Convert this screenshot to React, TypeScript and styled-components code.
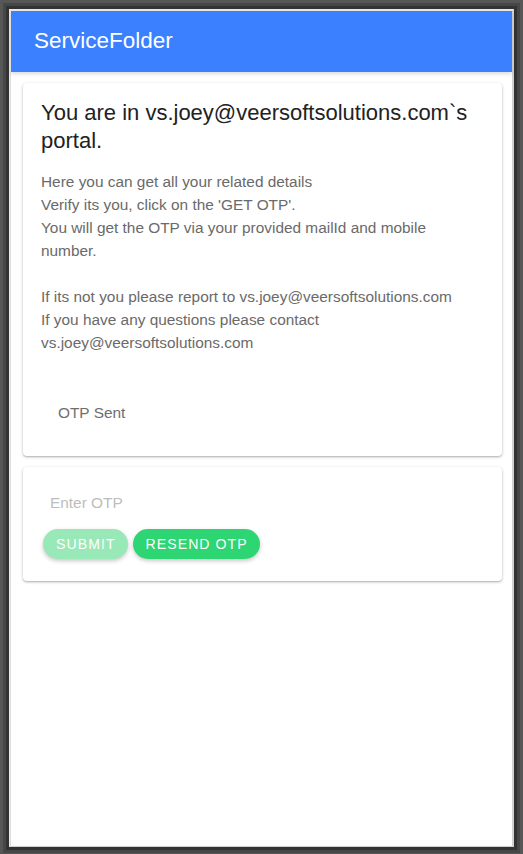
import React from "react";
import styled, { createGlobalStyle } from "styled-components";

const GlobalStyle = createGlobalStyle`
  html, body {
    margin: 0;
    height: 854px;
  }
  body {
    background: #575757;
    padding: 9px 9px 7px 9px;
    box-sizing: border-box;
    font-family: "Liberation Sans", Arial, sans-serif;
    overflow: hidden;
  }
  #root {
    height: 100%;
  }
`;

const App = () => {
  return (
    <>
      <GlobalStyle />
      <Window>
        <AppBar>
          <Brand>ServiceFolder</Brand>
        </AppBar>
        <Content>
          <Card>
            <Title>You are in vs.joey@veersoftsolutions.com`s portal.</Title>
            <Body>
              Here you can get all your related details
              <br />
              Verify its you, click on the 'GET OTP'.
              <br />
              You will get the OTP via your provided mailId and mobile number.
              <br />
              <br />
              If its not you please report to vs.joey@veersoftsolutions.com
              <br />
              If you have any questions please contact vs.joey@veersoftsolutions.com
            </Body>
            <StatusButton disabled>OTP Sent</StatusButton>
          </Card>
          <Card $compact>
            <OtpInput placeholder="Enter OTP" />
            <Actions>
              <PillButton $muted>Submit</PillButton>
              <PillButton>Resend OTP</PillButton>
            </Actions>
          </Card>
        </Content>
      </Window>
    </>
  );
};

export default App;

const Window = styled.div`
  height: 100%;
  box-sizing: border-box;
  background: #fff;
  border-top: 2px solid #e9e9e9;
  border-left: 2px solid #e9e9e9;
  border-right: 2px solid #d2d2d2;
  border-bottom: 1px solid #cfcfcf;
  box-shadow: 0 0 0 3px #333333, 0 0 0 6px #474747;
  display: flex;
  flex-direction: column;
`;

const AppBar = styled.header`
  height: 61px;
  flex-shrink: 0;
  background: #3a80ff;
  display: flex;
  align-items: center;
  padding-left: 23px;
  box-shadow: 0 2px 4px rgba(0, 0, 0, 0.14);
  position: relative;
  z-index: 1;
`;

const Brand = styled.h1`
  margin: 0;
  color: #fff;
  font-size: 22.5px;
  font-weight: 400;
  line-height: 1;
`;

const Content = styled.main`
  flex: 1;
  padding: 11px 10px 0 12px;
  display: flex;
  flex-direction: column;
  gap: 11px;
  border-left: 1px solid #dedede;
  margin-left: -1px;
`;

const Card = styled.section<{ $compact?: boolean }>`
  background: #fff;
  border-radius: 4px;
  box-shadow: 0 1px 3px rgba(0, 0, 0, 0.28), 0 1px 1px rgba(0, 0, 0, 0.08);
  padding: ${(p) => (p.$compact ? "18px 18px 22px 20px" : "16px 18px 0 18px")};
  height: ${(p) => (p.$compact ? "auto" : "373px")};
  box-sizing: border-box;
`;

const Title = styled.h2`
  margin: 0 0 15px;
  font-size: 22px;
  font-weight: 400;
  line-height: 28px;
  color: #222;
`;

const Body = styled.p`
  margin: 0;
  font-size: 15.4px;
  line-height: 23px;
  color: #6a6a6a;
`;

const StatusButton = styled.button`
  margin-top: 47px;
  padding: 0 17px;
  border: none;
  background: none;
  font-family: inherit;
  font-size: 15.4px;
  line-height: 23px;
  color: #6e6e6e;
`;

const OtpInput = styled.input`
  display: block;
  width: 100%;
  box-sizing: border-box;
  height: 36px;
  margin-left: -2px;
  padding: 0 9px;
  border: none;
  outline: none;
  font-family: inherit;
  font-size: 15.4px;
  color: #333;
  &::placeholder {
    color: #bdbdbd;
  }
`;

const Actions = styled.div`
  display: flex;
  gap: 5px;
  margin-top: 8px;
`;

const PillButton = styled.button<{ $muted?: boolean }>`
  height: 30px;
  padding: 0 12px 0 13px;
  border: none;
  border-radius: 15px;
  background: ${(p) => (p.$muted ? "#99e8b7" : "#2ed573")};
  color: #fff;
  font-family: inherit;
  font-size: 14.1px;
  letter-spacing: 1.05px;
  text-transform: uppercase;
  box-shadow: 0 2px 4px rgba(0, 0, 0, 0.22);
  cursor: pointer;
`;
